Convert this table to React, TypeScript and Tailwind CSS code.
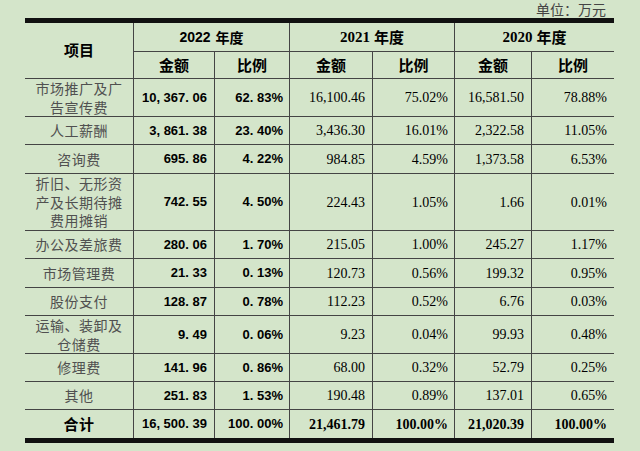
import React from "react";

type Row = {
  label: string[];
  h: string;
  a: string;
  b: string;
  c: string;
  d: string;
  e: string;
  f: string;
  total?: boolean;
};

const rows: Row[] = [
  { label: ["市场推广及广", "告宣传费"], h: "h-[38px]", a: "10, 367. 06", b: "62. 83%", c: "16,100.46", d: "75.02%", e: "16,581.50", f: "78.88%" },
  { label: ["人工薪酬"], h: "h-[28px]", a: "3, 861. 38", b: "23. 40%", c: "3,436.30", d: "16.01%", e: "2,322.58", f: "11.05%" },
  { label: ["咨询费"], h: "h-[29px]", a: "695. 86", b: "4. 22%", c: "984.85", d: "4.59%", e: "1,373.58", f: "6.53%" },
  { label: ["折旧、无形资", "产及长期待摊", "费用摊销"], h: "h-[57px]", a: "742. 55", b: "4. 50%", c: "224.43", d: "1.05%", e: "1.66", f: "0.01%" },
  { label: ["办公及差旅费"], h: "h-[28px]", a: "280. 06", b: "1. 70%", c: "215.05", d: "1.00%", e: "245.27", f: "1.17%" },
  { label: ["市场管理费"], h: "h-[29px]", a: "21. 33", b: "0. 13%", c: "120.73", d: "0.56%", e: "199.32", f: "0.95%" },
  { label: ["股份支付"], h: "h-[28px]", a: "128. 87", b: "0. 78%", c: "112.23", d: "0.52%", e: "6.76", f: "0.03%" },
  { label: ["运输、装卸及", "仓储费"], h: "h-[38px]", a: "9. 49", b: "0. 06%", c: "9.23", d: "0.04%", e: "99.93", f: "0.48%" },
  { label: ["修理费"], h: "h-[28px]", a: "141. 96", b: "0. 86%", c: "68.00", d: "0.32%", e: "52.79", f: "0.25%" },
  { label: ["其他"], h: "h-[28px]", a: "251. 83", b: "1. 53%", c: "190.48", d: "0.89%", e: "137.01", f: "0.65%" },
  { label: ["合计"], h: "h-[28px]", a: "16, 500. 39", b: "100. 00%", c: "21,461.79", d: "100.00%", e: "21,020.39", f: "100.00%", total: true },
];

const cjk = "font-['Noto_Sans_CJK_SC',sans-serif]";
const sansNum = "font-['Liberation_Sans','Noto_Sans_CJK_SC',sans-serif] font-bold text-[13px] text-black";
const serifNum = "font-['Liberation_Serif','Noto_Sans_CJK_SC',serif] text-[14px] text-black";

export default function App() {
  return (
    <div className="w-[640px] h-[451px] bg-[#d4e5ca] overflow-hidden">
      <div className={`h-[18px] pr-[34px] text-right text-[14px] leading-[18px] text-[#444] ${cjk}`}>
        单位：万元
      </div>
      <div className="ml-[25px] w-[589px] border-t-[5px] border-b-[5px] border-[#111]">
        <div className="grid grid-cols-[109px_81px_75px_83px_82px_77px_82px] grid-rows-[29px_27px]">
          <div className={`row-span-2 flex items-center justify-center border-r border-b border-[#444] text-[15px] font-bold text-black ${cjk}`}>
            项目
          </div>
          <div className="col-span-2 flex items-center justify-center border-r border-b border-[#444] text-[14px] font-bold text-black">
            <span className="font-['Liberation_Sans',sans-serif]">2022</span>
            <span className={`ml-[5px] ${cjk}`}>年度</span>
          </div>
          <div className="col-span-2 flex items-center justify-center border-r border-b border-[#444] text-[15px] font-bold text-black">
            <span className="font-['Liberation_Serif',serif]">2021</span>
            <span className={`ml-[4px] ${cjk}`}>年度</span>
          </div>
          <div className="col-span-2 flex items-center justify-center border-b border-[#444] text-[15px] font-bold text-black">
            <span className="font-['Liberation_Serif',serif]">2020</span>
            <span className={`ml-[4px] ${cjk}`}>年度</span>
          </div>
          {["金额", "比例", "金额", "比例", "金额", "比例"].map((t, i) => (
            <div
              key={i}
              className={`flex items-center justify-center border-b border-[#444] text-[15px] font-bold text-black ${cjk} ${i < 5 ? "border-r" : ""}`}
            >
              {t}
            </div>
          ))}
        </div>
        {rows.map((r, i) => {
          const last = i === rows.length - 1;
          const bb = last ? "" : "border-b";
          const serif = r.total ? `${serifNum} font-bold` : serifNum;
          return (
            <div
              key={i}
              className={`grid grid-cols-[109px_81px_75px_83px_82px_77px_82px] ${r.h}`}
            >
              <div
                className={`flex flex-col items-center justify-center border-r ${bb} border-[#444] text-[14px] leading-[18.5px] tracking-[0.5px] ${cjk} ${r.total ? "font-bold text-black text-[15px]" : "text-[#505050]"}`}
              >
                {r.label.map((l, j) => (
                  <span key={j}>{l}</span>
                ))}
              </div>
              <div className={`flex items-center justify-end pr-[7px] border-r ${bb} border-[#444] whitespace-pre ${sansNum}`}>{r.a}</div>
              <div className={`flex items-center justify-end pr-[6px] border-r ${bb} border-[#444] whitespace-pre ${sansNum}`}>{r.b}</div>
              <div className={`flex items-center justify-end pr-[7px] border-r ${bb} border-[#444] ${serif}`}>{r.c}</div>
              <div className={`flex items-center justify-end pr-[6px] border-r ${bb} border-[#444] ${serif}`}>{r.d}</div>
              <div className={`flex items-center justify-end pr-[7px] border-r ${bb} border-[#444] ${serif}`}>{r.e}</div>
              <div className={`flex items-center justify-end pr-[7px] ${bb} border-[#444] ${serif}`}>{r.f}</div>
            </div>
          );
        })}
      </div>
    </div>
  );
}
